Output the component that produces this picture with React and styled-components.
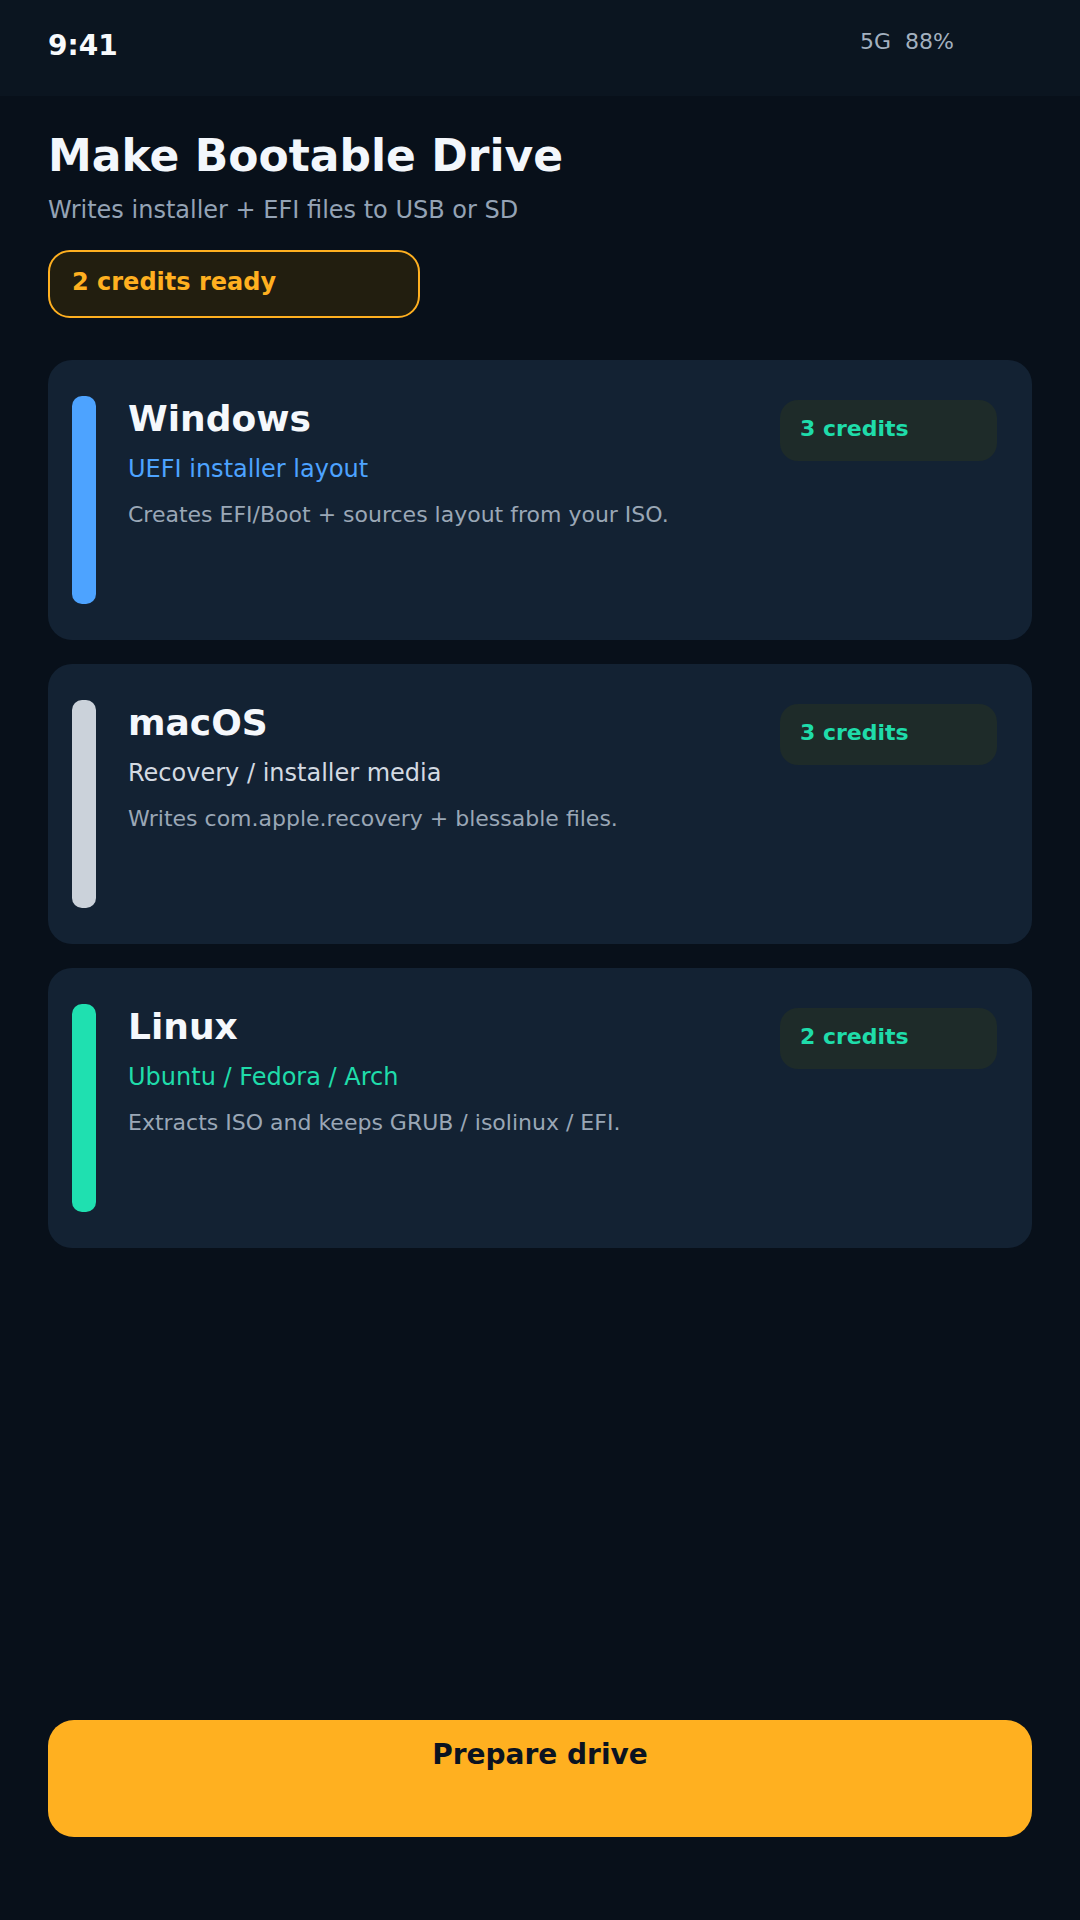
import React from "react";
import styled, { createGlobalStyle } from "styled-components";

const Global = createGlobalStyle`
  html, body { margin: 0; padding: 0; background: #08101a; }
  body { font-family: "DejaVu Sans", "Noto Sans", sans-serif; }
  * { box-sizing: border-box; }
`;

const Screen = styled.div`
  min-height: 100vh;
  display: flex;
  flex-direction: column;
  background: #08101a;
  color: #f3f7fc;
`;

const StatusBar = styled.div`
  height: 96px;
  padding: 29px 48px 0;
  display: flex;
  justify-content: space-between;
  align-items: flex-start;
  background: #0b1520;
`;

const Time = styled.span`
  font-size: 28px;
  font-weight: 700;
  color: #f8fafc;
`;

const Indicators = styled.span`
  font-size: 22px;
  color: #a3b0bf;
  white-space: pre;
  margin-right: 78px;
`;

const Main = styled.main`
  padding: 34px 48px 0;
  display: flex;
  flex-direction: column;
`;

const Heading = styled.h1`
  margin: 0 0 15px;
  font-size: 44px;
  font-weight: 700;
  color: #f3f7fc;
`;

const Lead = styled.p`
  margin: 0 0 26px;
  font-size: 24px;
  color: #94a3b5;
`;

const CreditsPill = styled.div`
  width: 372px;
  height: 68px;
  padding: 16px 22px;
  border: 2px solid #ffb020;
  border-radius: 22px;
  background: #221e0f;
  color: #ffb020;
  font-size: 24px;
  font-weight: 700;
`;

const CardList = styled.div`
  margin-top: 42px;
  display: flex;
  flex-direction: column;
  gap: 24px;
`;

const Card = styled.div`
  height: 280px;
  padding: 36px 35px 36px 24px;
  display: flex;
  gap: 32px;
  background: #132233;
  border-radius: 24px;
`;

const AccentBar = styled.div`
  width: 24px;
  flex-shrink: 0;
  border-radius: 10px;
  background: ${(p) => p.$color};
`;

const CardBody = styled.div`
  flex: 1;
  padding-top: 2px;
  display: flex;
  flex-direction: column;
`;

const CardTitle = styled.div`
  font-size: 36px;
  font-weight: 700;
  color: #f5f8fc;
  margin-bottom: 16px;
`;

const CardSub = styled.div`
  font-size: 24px;
  color: ${(p) => p.$color};
  margin-bottom: 19px;
`;

const CardDesc = styled.div`
  font-size: 22px;
  color: #9aa7b6;
`;

const Badge = styled.div`
  align-self: flex-start;
  margin-top: 4px;
  width: 217px;
  height: 61px;
  padding: 16px 20px;
  border-radius: 18px;
  background: #1e2b29;
  color: #1fdcaa;
  font-size: 22px;
  font-weight: 700;
  flex-shrink: 0;
`;

const Spacer = styled.div`
  flex: 1;
`;

const PrimaryButton = styled.button`
  margin: 0 48px 83px;
  height: 117px;
  padding: 18px 0 0;
  border: none;
  border-radius: 26px;
  background: #ffb020;
  color: #0b1320;
  font-family: "DejaVu Sans", sans-serif;
  font-size: 28px;
  font-weight: 700;
  line-height: normal;
  cursor: pointer;
  display: flex;
  justify-content: center;
  align-items: flex-start;
`;

const options = [
  {
    name: "Windows",
    sub: "UEFI installer layout",
    subColor: "#4da3ff",
    bar: "#4da3ff",
    desc: "Creates EFI/Boot + sources layout from your ISO.",
    credits: "3 credits",
  },
  {
    name: "macOS",
    sub: "Recovery / installer media",
    subColor: "#d3dae2",
    bar: "#cbd2da",
    desc: "Writes com.apple.recovery + blessable files.",
    credits: "3 credits",
  },
  {
    name: "Linux",
    sub: "Ubuntu / Fedora / Arch",
    subColor: "#1fdcaa",
    bar: "#1fe0b0",
    desc: "Extracts ISO and keeps GRUB / isolinux / EFI.",
    credits: "2 credits",
  },
];

export default function App() {
  return (
    <>
      <Global />
      <Screen>
        <StatusBar>
          <Time>9:41</Time>
          <Indicators>{"5G  88%"}</Indicators>
        </StatusBar>
        <Main>
          <Heading>Make Bootable Drive</Heading>
          <Lead>Writes installer + EFI files to USB or SD</Lead>
          <CreditsPill>2 credits ready</CreditsPill>
          <CardList>
            {options.map((o) => (
              <Card key={o.name}>
                <AccentBar $color={o.bar} />
                <CardBody>
                  <CardTitle>{o.name}</CardTitle>
                  <CardSub $color={o.subColor}>{o.sub}</CardSub>
                  <CardDesc>{o.desc}</CardDesc>
                </CardBody>
                <Badge>{o.credits}</Badge>
              </Card>
            ))}
          </CardList>
        </Main>
        <Spacer />
        <PrimaryButton>Prepare drive</PrimaryButton>
      </Screen>
    </>
  );
}
